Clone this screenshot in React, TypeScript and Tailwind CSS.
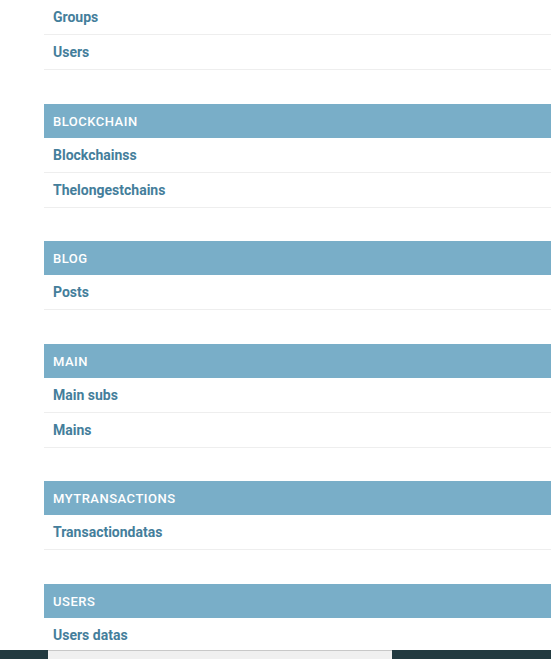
import React from "react";

const sections: { title?: string; items: string[] }[] = [
  { items: ["Groups", "Users"] },
  { title: "Blockchain", items: ["Blockchainss", "Thelongestchains"] },
  { title: "Blog", items: ["Posts"] },
  { title: "Main", items: ["Main subs", "Mains"] },
  { title: "Mytransactions", items: ["Transactiondatas"] },
  { title: "Users", items: ["Users datas"] },
];

export default function App() {
  return (
    <div
      className="relative h-[659px] w-[551px] overflow-hidden bg-white"
      style={{ fontFamily: "Roboto, 'Liberation Sans', sans-serif" }}
    >
      <div className="flex flex-col pl-[44px]">
        {sections.map((s, i) => (
          <div key={i} className="w-[600px] mb-[33.5px]">
            {s.title && (
              <div className="h-[34px] bg-[#79aec8] px-[9px] pt-px text-[13px] font-medium leading-[34px] uppercase tracking-[0.5px] text-white">
                {s.title}
              </div>
            )}
            {s.items.map((it) => (
              <div
                key={it}
                className="h-[35px] border-b border-[#eeeeee] px-[9px] pt-px text-[14px] font-bold leading-[33px] text-[#447e9b]"
              >
                {it}
              </div>
            ))}
          </div>
        ))}
      </div>
      <div className="absolute bottom-0 left-0 right-0 flex h-[9px] bg-[#223a40]">
        <div className="ml-[48px] h-full w-[344px] border-t border-[#c8c8c8] bg-[#f0f0f0]" />
      </div>
    </div>
  );
}
